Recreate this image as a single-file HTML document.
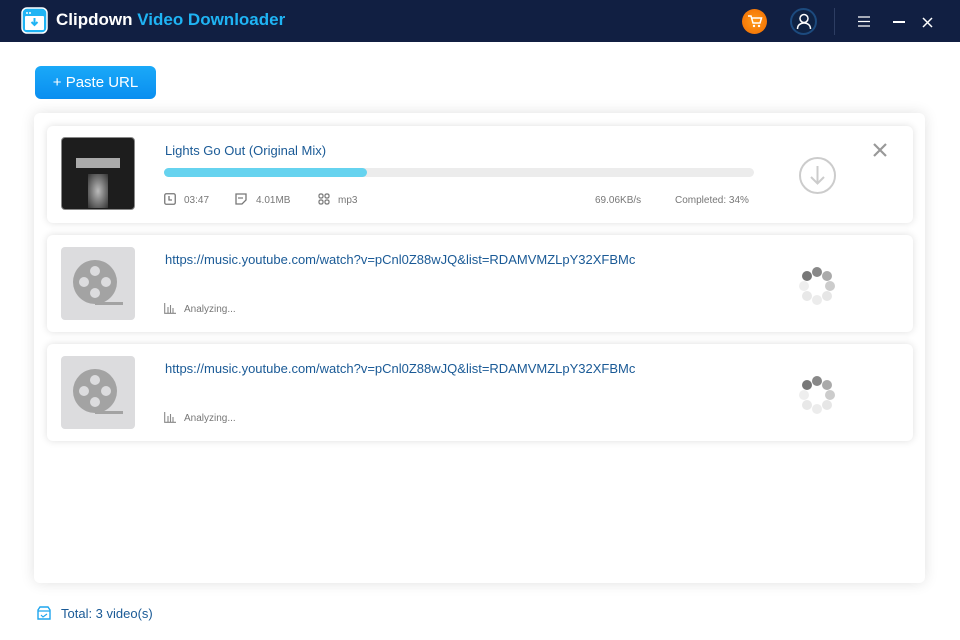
<!DOCTYPE html>
<html><head><meta charset="utf-8"><style>
*{margin:0;padding:0;box-sizing:border-box}
body{width:960px;height:640px;background:#fff;font-family:"Liberation Sans",sans-serif;position:relative;overflow:hidden}
.top{position:absolute;left:0;top:0;width:960px;height:42px;background:#111f42}
.title{position:absolute;left:56px;top:10px;font-size:17px;font-weight:bold;color:#fff}
.title span{color:#1fb4f4}
.btn{position:absolute;left:35px;top:66px;width:121px;height:33px;border-radius:6px;background:linear-gradient(#1aa9f8,#0a8ef0);color:#fff;font-size:15px;text-align:center;line-height:33px}
.panel{position:absolute;left:34px;top:113px;width:891px;height:470px;background:#fff;border-radius:6px;box-shadow:0 0 14px rgba(0,0,0,.12)}
.row{position:absolute;left:47px;width:866px;height:97px;background:#fff;border-radius:6px;box-shadow:0 0 8px rgba(0,0,0,.13)}
.thumb{position:absolute;left:14px;top:12px;width:74px;height:73px;background:#dcdcde;border-radius:4px}
.name{position:absolute;left:118px;top:17px;font-size:13px;color:#1a5a96}
.meta{position:absolute;top:69px;font-size:10px;color:#777}
.spin i{position:absolute;width:10px;height:10px;border-radius:50%}
</style></head><body>
<div class="top">
<svg style="position:absolute;left:21px;top:7px" width="27" height="27" viewBox="0 0 27 27"><rect x="1" y="1" width="25" height="25" rx="5" fill="#1fb4f4" stroke="#fff" stroke-width="1.5"/><rect x="4" y="9" width="19" height="14" rx="1" fill="#fff"/><path d="M13.5 11v7M10.5 15l3 3 3-3" stroke="#1fb4f4" stroke-width="2" fill="none"/><circle cx="6" cy="6" r="1" fill="#fff"/><circle cx="9" cy="6" r="1" fill="#fff"/></svg>
<div class="title">Clipdown <span>Video Downloader</span></div>
<div style="position:absolute;left:742px;top:9px;width:25px;height:25px;border-radius:50%;background:radial-gradient(#ff9a1a,#f06a00)"></div>
<svg style="position:absolute;left:747px;top:14px" width="16" height="15" viewBox="0 0 16 15"><path d="M1 2h3l2 7h7l1.5-5H5" stroke="#fff" stroke-width="1.5" fill="none"/><circle cx="7" cy="12" r="1.2" fill="#fff"/><circle cx="12" cy="12" r="1.2" fill="#fff"/></svg>
<div style="position:absolute;left:790px;top:8px;width:27px;height:27px;border-radius:50%;border:2px solid #1c4a7e;background:#0f2243"></div>
<svg style="position:absolute;left:796px;top:13px" width="16" height="17" viewBox="0 0 16 17"><circle cx="8" cy="5.5" r="4" stroke="#fff" stroke-width="1.5" fill="none"/><path d="M1.5 16c0-4 3-6 6.5-6s6.5 2 6.5 6" stroke="#fff" stroke-width="1.5" fill="none"/></svg>
<div style="position:absolute;left:834px;top:8px;width:1px;height:27px;background:#2d3d62"></div>
<svg style="position:absolute;left:858px;top:16px" width="12" height="11"><path d="M0 1h12M0 5.5h12M0 10h12" stroke="#fff" stroke-width="1.3"/></svg>
<div style="position:absolute;left:893px;top:21px;width:12px;height:2px;background:#fff"></div>
<svg style="position:absolute;left:922px;top:17px" width="11" height="11"><path d="M1 1l9 9M10 1l-9 9" stroke="#fff" stroke-width="1.5"/></svg>
</div>
<div class="btn">+ Paste URL</div>
<div class="panel"></div>

<div class="row" style="top:126px">
<div class="thumb" style="background:#1d1d1d;border:1px solid #888;left:14px;top:11px">
<div style="position:absolute;left:14px;top:20px;width:44px;height:10px;background:#aaa"></div>
<div style="position:absolute;left:26px;top:36px;width:20px;height:34px;background:radial-gradient(#bbb,#333)"></div></div>
<div class="name">Lights Go Out (Original Mix)</div>
<div style="position:absolute;left:117px;top:42px;width:590px;height:9px;border-radius:5px;background:#ececec"><div style="width:203px;height:9px;border-radius:5px;background:#66d3ef"></div></div>
<svg style="position:absolute;left:117px;top:67px" width="12" height="12"><rect x=".75" y=".75" width="10.5" height="10.5" rx="1.5" stroke="#777" stroke-width="1.3" fill="none"/><path d="M5 3v4h3" stroke="#777" stroke-width="1.3" fill="none"/></svg>
<div class="meta" style="left:137px">03:47</div>
<svg style="position:absolute;left:188px;top:67px" width="12" height="12"><path d="M1 1h10v6l-4 4H1z" stroke="#777" stroke-width="1.3" fill="none"/><path d="M3 5h5" stroke="#777" stroke-width="1.2"/></svg>
<div class="meta" style="left:209px">4.01MB</div>
<svg style="position:absolute;left:271px;top:67px" width="12" height="12"><g stroke="#777" stroke-width="1.2" fill="none"><rect x="1" y="1" width="4" height="4" rx="1.5"/><rect x="7" y="1" width="4" height="4" rx="1.5"/><rect x="1" y="7" width="4" height="4" rx="1.5"/><rect x="7" y="7" width="4" height="4" rx="1.5"/></g></svg>
<div class="meta" style="left:291px">mp3</div>
<div class="meta" style="left:548px">69.06KB/s</div>
<div class="meta" style="left:628px">Completed: 34%</div>
<svg style="position:absolute;left:751px;top:30px" width="39" height="39"><circle cx="19.5" cy="19.5" r="17.5" stroke="#ccc" stroke-width="2" fill="none"/><path d="M19.5 10v17M13 21l6.5 6.5 6.5-6.5" stroke="#ccc" stroke-width="2" fill="none"/></svg>
<svg style="position:absolute;left:826px;top:17px" width="14" height="14"><path d="M1 1l12 12M13 1L1 13" stroke="#999" stroke-width="2.2"/></svg>
</div>

<div class="row" style="top:235px">
<div class="thumb"><svg style="position:absolute;left:11px;top:12px" width="52" height="48" viewBox="0 0 52 48"><circle cx="23" cy="23" r="22" fill="#a3a3a3"/><g fill="#dcdcde"><circle cx="23" cy="12" r="5"/><circle cx="12" cy="23" r="5"/><circle cx="34" cy="23" r="5"/><circle cx="23" cy="34" r="5"/></g><rect x="23" y="43" width="28" height="3" fill="#a3a3a3"/></svg></div>
<div class="name">https://music.youtube.com/watch?v=pCnl0Z88wJQ&amp;list=RDAMVMZLpY32XFBMc</div>
<svg style="position:absolute;left:117px;top:68px" width="12" height="11"><path d="M.7 0v10.3H12M4 4v6M6.5 2v8M9 5v5" stroke="#888" stroke-width="1.1" fill="none"/></svg>
<div class="meta" style="left:137px">Analyzing...</div>
<div class="spin" style="position:absolute;left:752px;top:32px">
<i style="left:13px;top:0;background:#888"></i><i style="left:3px;top:4px;background:#777"></i><i style="left:23px;top:4px;background:#aaa"></i><i style="left:0;top:14px;background:#eee"></i><i style="left:26px;top:14px;background:#ccc"></i><i style="left:3px;top:24px;background:#e8e8e8"></i><i style="left:23px;top:24px;background:#e6e6e6"></i><i style="left:13px;top:28px;background:#ececec"></i></div>
</div>

<div class="row" style="top:344px">
<div class="thumb"><svg style="position:absolute;left:11px;top:12px" width="52" height="48" viewBox="0 0 52 48"><circle cx="23" cy="23" r="22" fill="#a3a3a3"/><g fill="#dcdcde"><circle cx="23" cy="12" r="5"/><circle cx="12" cy="23" r="5"/><circle cx="34" cy="23" r="5"/><circle cx="23" cy="34" r="5"/></g><rect x="23" y="43" width="28" height="3" fill="#a3a3a3"/></svg></div>
<div class="name">https://music.youtube.com/watch?v=pCnl0Z88wJQ&amp;list=RDAMVMZLpY32XFBMc</div>
<svg style="position:absolute;left:117px;top:68px" width="12" height="11"><path d="M.7 0v10.3H12M4 4v6M6.5 2v8M9 5v5" stroke="#888" stroke-width="1.1" fill="none"/></svg>
<div class="meta" style="left:137px">Analyzing...</div>
<div class="spin" style="position:absolute;left:752px;top:32px">
<i style="left:13px;top:0;background:#888"></i><i style="left:3px;top:4px;background:#777"></i><i style="left:23px;top:4px;background:#aaa"></i><i style="left:0;top:14px;background:#eee"></i><i style="left:26px;top:14px;background:#ccc"></i><i style="left:3px;top:24px;background:#e8e8e8"></i><i style="left:23px;top:24px;background:#e6e6e6"></i><i style="left:13px;top:28px;background:#ececec"></i></div>
</div>

<svg style="position:absolute;left:37px;top:606px" width="14" height="14"><path d="M1 4l2-3h8l2 3v9H1z" stroke="#1fa6ee" stroke-width="1.4" fill="none"/><path d="M1 5h12M4 9l2 2 4-3" stroke="#1fa6ee" stroke-width="1.2" fill="none"/></svg>
<div style="position:absolute;left:61px;top:606px;font-size:13px;color:#1a5a96">Total: 3 video(s)</div>
</body></html>
